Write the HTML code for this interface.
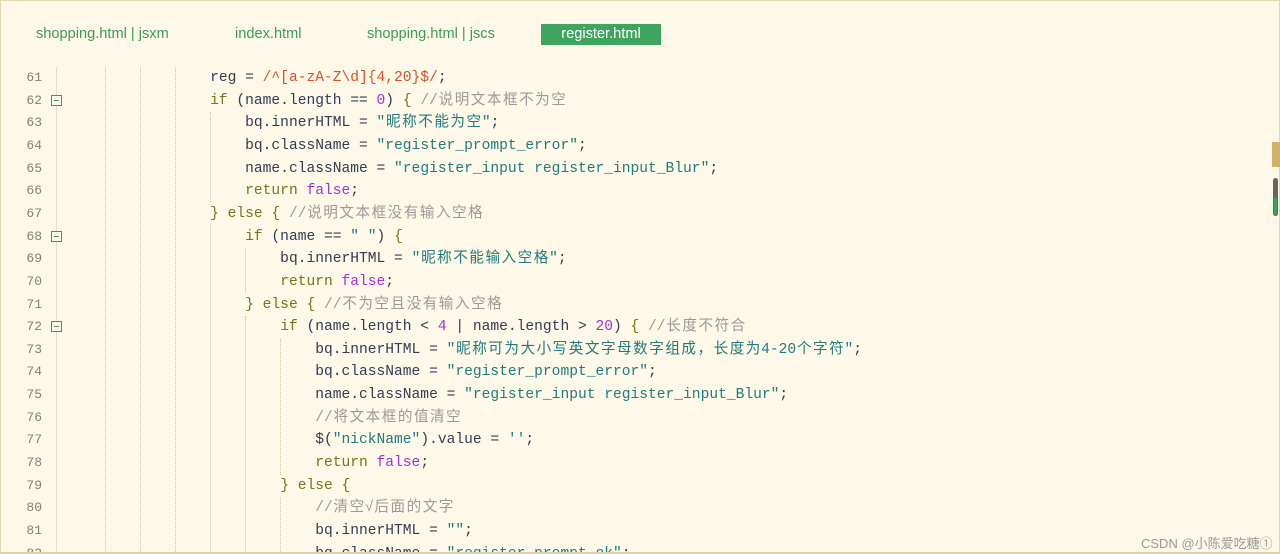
<!DOCTYPE html>
<html><head><meta charset="utf-8"><style>
body{margin:0;width:1280px;height:554px;overflow:hidden;background:#fdf8e7;position:relative;font-family:"Liberation Sans",sans-serif}
.frame{position:absolute;left:0;top:0;width:1278px;height:551px;border:1px solid #e3d7b0;border-bottom:2px solid #dccfa3;box-sizing:content-box}
.tab{position:absolute;top:24px;height:21px;line-height:21px;font-size:14.6px;color:#3c9a55}
.act{background:#3fa45d;color:#fff;left:541px;width:120px;text-align:center}
.ln{position:absolute;left:0;width:42px;text-align:right;font:13px "Liberation Mono",monospace;color:#8c7f66}
.code{position:absolute;left:70px;font:14.6px "Liberation Mono","Noto Sans CJK SC",monospace;white-space:pre;color:#333b55}
.z{display:inline-block;width:16.1px;text-align:center}
.k{color:#6b7a1c}.s{color:#1f7b7d}.n{color:#a230e0}.c{color:#9a9a9a}.r{color:#d2532a}
.g{position:absolute;width:0;border-left:1px dotted #cfc6a8}
.gs{position:absolute;width:0;border-left:1px solid #e2dcc8}
.fold{position:absolute;left:51px;width:9px;height:9px;border:1px solid #3c9a55;background:#fdf8e7}
.fold:after{content:"";position:absolute;left:2px;top:4px;width:5px;height:1px;background:#3c9a55}
</style></head><body>
<div class="frame"></div>
<div class="tab" style="left:36px">shopping.html | jsxm</div>
<div class="tab" style="left:235px">index.html</div>
<div class="tab" style="left:367px">shopping.html | jscs</div>
<div class="tab act">register.html</div>
<div class="gs" style="left:56px;top:67px;height:485px"></div>
<div class="g" style="left:105px;top:67px;height:485px"></div>
<div class="g" style="left:140px;top:67px;height:485px"></div>
<div class="g" style="left:175px;top:67px;height:485px"></div>
<div class="g" style="left:210px;top:112px;height:90px"></div>
<div class="g" style="left:210px;top:225px;height:327px"></div>
<div class="g" style="left:245px;top:248px;height:45px"></div>
<div class="g" style="left:245px;top:316px;height:236px"></div>
<div class="g" style="left:280px;top:339px;height:136px"></div>
<div class="g" style="left:280px;top:497px;height:55px"></div>
<div class="fold" style="top:95px"></div>
<div class="fold" style="top:231px"></div>
<div class="fold" style="top:321px"></div>
<div style="position:absolute;right:0;top:142px;width:8px;height:25px;background:#cfb26a"></div>
<div style="position:absolute;left:1273px;top:178px;width:5px;height:38px;border-radius:3px;background:#66665c"></div>
<div style="position:absolute;left:1274px;top:198px;width:3px;height:16px;background:#3aa55a"></div>
<div id="L" style="position:absolute;left:0;top:0;width:1280px;height:552px;overflow:hidden"></div>
<div style="position:absolute;left:1141px;top:533px;font-size:13px;color:#9a9a9a">CSDN @小陈爱吃糖①</div>
<script>
var lines=[
['                ','reg = <span class="r">/^[a-zA-Z\\d]{4,20}$/</span>;'],
['                ','<span class="k">if</span> (name.length == <span class="n">0</span>) <span class="k">{</span> <span class="c">//说明文本框不为空</span>'],
['                    ','bq.innerHTML = <span class="s">"昵称不能为空"</span>;'],
['                    ','bq.className = <span class="s">"register_prompt_error"</span>;'],
['                    ','name.className = <span class="s">"register_input register_input_Blur"</span>;'],
['                    ','<span class="k">return</span> <span class="n">false</span>;'],
['                ','<span class="k">} else {</span> <span class="c">//说明文本框没有输入空格</span>'],
['                    ','<span class="k">if</span> (name == <span class="s">" "</span>) <span class="k">{</span>'],
['                        ','bq.innerHTML = <span class="s">"昵称不能输入空格"</span>;'],
['                        ','<span class="k">return</span> <span class="n">false</span>;'],
['                    ','<span class="k">} else {</span> <span class="c">//不为空且没有输入空格</span>'],
['                        ','<span class="k">if</span> (name.length &lt; <span class="n">4</span> | name.length &gt; <span class="n">20</span>) <span class="k">{</span> <span class="c">//长度不符合</span>'],
['                            ','bq.innerHTML = <span class="s">"昵称可为大小写英文字母数字组成，长度为4-20个字符"</span>;'],
['                            ','bq.className = <span class="s">"register_prompt_error"</span>;'],
['                            ','name.className = <span class="s">"register_input register_input_Blur"</span>;'],
['                            ','<span class="c">//将文本框的值清空</span>'],
['                            ','$(<span class="s">"nickName"</span>).value = <span class="s">\'\'</span>;'],
['                            ','<span class="k">return</span> <span class="n">false</span>;'],
['                        ','<span class="k">} else {</span>'],
['                            ','<span class="c">//清空√后面的文字</span>'],
['                            ','bq.innerHTML = <span class="s">""</span>;'],
['                            ','bq.className = <span class="s">"register_prompt_ok"</span>;']
];
var h='';
for(var i=0;i<lines.length;i++){var t=67+i*22.65;
var c=lines[i][1].replace(/[\u4e00-\u9fff\uff0c]/g,function(m){return '<span class="z">'+m+'</span>';});
h+='<div class="ln" style="top:'+(t+3)+'px">'+(61+i)+'</div><div class="code" style="top:'+t+'px;line-height:22px">'+lines[i][0]+c+'</div>';}
document.getElementById('L').innerHTML=h;
</script>
</body></html>
